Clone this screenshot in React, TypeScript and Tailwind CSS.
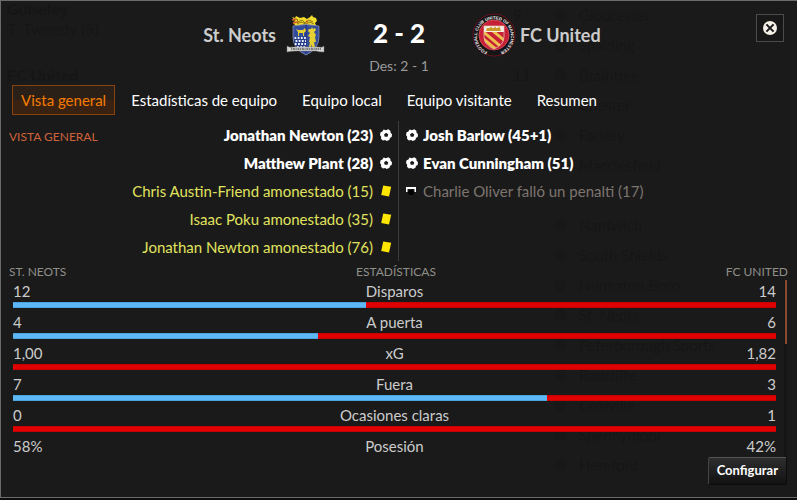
import type { ReactNode } from "react";

const tabs = [
  "Vista general",
  "Estadísticas de equipo",
  "Equipo local",
  "Equipo visitante",
  "Resumen",
];

type EventKind = "goal" | "card" | "miss";

const homeEvents: { kind: EventKind; text: string }[] = [
  { kind: "goal", text: "Jonathan Newton (23)" },
  { kind: "goal", text: "Matthew Plant (28)" },
  { kind: "card", text: "Chris Austin-Friend amonestado (15)" },
  { kind: "card", text: "Isaac Poku amonestado (35)" },
  { kind: "card", text: "Jonathan Newton amonestado (76)" },
];

const awayEvents: { kind: EventKind; text: string }[] = [
  { kind: "goal", text: "Josh Barlow (45+1)" },
  { kind: "goal", text: "Evan Cunningham (51)" },
  { kind: "miss", text: "Charlie Oliver falló un penalti (17)" },
];

const stats = [
  { label: "Disparos", home: "12", away: "14", share: 46.2 },
  { label: "A puerta", home: "4", away: "6", share: 40 },
  { label: "xG", home: "1,00", away: "1,82", share: 0 },
  { label: "Fuera", home: "7", away: "3", share: 70 },
  { label: "Ocasiones claras", home: "0", away: "1", share: 0 },
];

const leagueTeams = [
  "Gloucester",
  "Spalding",
  "Braintree",
  "Chester",
  "Farsley",
  "Macclesfield",
  "",
  "Nantwich",
  "South Shields",
  "Nuneaton Boro",
  "St. Neots",
  "Peterborough Sports",
  "Radcliffe",
  "Coalville",
  "Spennymoor",
  "Hereford",
];

const eventStyles: Record<EventKind, string> = {
  goal: "font-extrabold text-white",
  card: "text-[#e0e35e]",
  miss: "text-[#7d7570]",
};

function BallIcon() {
  return (
    <svg className="w-3 h-3 shrink-0" viewBox="0 0 12 12" aria-hidden="true">
      <path
        fill="#fff"
        d="M3.6.4l2.3.8L8.3.3l2 1.4.3 2 1.4 1.5-.3 2.8-1.6.8-.8 2.1-2.7 1-1.4-.8-2.3.3-1.9-1.7.2-2L0 6l.6-2.7 1.8-.8z"
      />
      <path fill="#1a1a1a" d="M6.1 3.8l2.2 1.6-.8 2.4H4.8L4 5.4z" />
    </svg>
  );
}

function CardIcon() {
  return (
    <svg className="w-3 h-3 shrink-0" viewBox="0 0 12 12" aria-hidden="true">
      <path fill="#ffe500" d="M3.2.4l8 1.4-2.2 9.8-7.8-1.6z" />
    </svg>
  );
}

function MissIcon() {
  return (
    <svg className="w-3 h-3 shrink-0" viewBox="0 0 12 12" aria-hidden="true">
      <path fill="#fff" d="M0 2h10v5H8.5V4h-7v3H0z" />
      <path fill="#000" d="M3 5h4l1 2-1 3H3L2 7z" />
    </svg>
  );
}

function EventIcon({ kind }: { kind: EventKind }) {
  if (kind === "goal") return <BallIcon />;
  if (kind === "card") return <CardIcon />;
  return <MissIcon />;
}

function NeotsCrest() {
  return (
    <svg className="w-10 h-[42px]" viewBox="0 0 40 42" role="img" aria-label="St. Neots">
      <path
        fill="#f1dc2d"
        d="M6 3l3 1 1-2 4 2 4-1 3 2 3-2 2-2 1 2 3 1 1 3-2 2 1 2-6 2H11L7 9l2-2z"
      />
      <path d="M7 7l4-2 1 3 4-2 3 3 4-3 4 2M11 10l4-2 5 2 4-2 4 2" fill="none" stroke="#7f6a10" strokeWidth=".9" />
      <path d="M6 6l4-1M7 9l5-1M20 7l2 1" stroke="#d0582b" strokeWidth="1.5" />
      <path d="M7 12q12-3 26 0v11q0 12-13 18Q7 35 7 23z" fill="#344c9c" stroke="#858eae" strokeWidth=".8" />
      <path d="M20 11v28" stroke="#202f70" />
      <path
        fill="#e6cf32"
        d="M10 15l2 1h5l2-2 1 3-2 2v3h-1v-3h-4v3h-1v-4zM25 15l1-2 1 2 2-1 1 2-2 2 2 3-1 2 1 5h-2l1 5h-3v-3l-1 3h-2l1-5h-1l1-5-2-1 2-3-2-2 1-2z"
      />
      <path fill="#263c87" d="M8 23h12v12l-5 1-7-7z" />
      <g stroke="#eef2ff" strokeWidth="1.8" strokeDasharray="1.8 1.4">
        <path d="M8.5 24H20M9.5 27H20M8.8 30H20M11 33H20" />
      </g>
      <path d="M1 32q3 2 6 1h26q3 1 5-1v6q-5 0-8-1H10q-5 0-9 1z" fill="#d8d8d5" stroke="#777" strokeWidth=".5" />
      <path d="M5 35h30" stroke="#5b5b5b" strokeWidth="1.6" strokeDasharray="1.2 .7 2 .6" />
    </svg>
  );
}

function UnitedCrest() {
  return (
    <svg className="w-[44px] h-[44px]" viewBox="0 0 44 44" role="img" aria-label="FC United">
      <defs>
        <path id="ring" d="M14.5 38.4A17 17 0 1 1 29.5 38.4" />
        <clipPath id="shield">
          <path d="M12 13h20v11q0 8-10 12-10-4-10-12z" />
        </clipPath>
      </defs>
      <circle cx="22" cy="22" r="21" fill="#171416" stroke="#65131e" />
      <circle cx="22" cy="22" r="15" fill="#c71f36" stroke="#e25c6b" strokeWidth=".7" />
      <text fill="#f0f0f0" fontSize="4.3" fontWeight="700" fontFamily="Liberation Sans, Arial, sans-serif">
        <textPath href="#ring" startOffset="50%" textAnchor="middle">
          FOOTBALL CLUB UNITED OF MANCHESTER
        </textPath>
      </text>
      <g clipPath="url(#shield)">
        <path fill="#c71f36" d="M10 10h24v28H10z" />
        <path stroke="#edc04c" strokeWidth="3" d="M8 16l26 22M8 23l24 20M15 13l24 20" />
        <path fill="#f3efe4" d="M11 12h22v7H11z" />
        <path fill="#c99a29" d="M14 18l1-3h3l1-2 1 2h2l1-2 1 2h2l1-2 1 2 1 3z" />
      </g>
      <path d="M12 13h20v11q0 8-10 12-10-4-10-12z" fill="none" stroke="#e6cdbb" strokeWidth=".7" />
    </svg>
  );
}

function Backdrop() {
  return (
    <div aria-hidden="true" className="absolute inset-0 text-[#161616]">
      <div className="absolute left-[6px] top-0 text-base leading-4 font-bold">Guiseley</div>
      <div className="absolute left-[6px] top-4 text-base">T. Tweedy (5)</div>
      <div className="absolute left-[6px] top-[62px] text-base font-bold">FC United</div>
      <ul className="absolute left-[512px] -top-px text-[15px]">
        {leagueTeams.map((team, i) => (
          <li key={i} className="flex h-[30px] items-center whitespace-nowrap">
            <span className="w-[42px]">{i === 0 || i === 2 ? i + 9 : ""}</span>
            {team && <span className="mr-3 h-3 w-3 rounded-full bg-[#181818]" />}
            {team}
          </li>
        ))}
      </ul>
    </div>
  );
}

function Caption({ children, className = "" }: { children: ReactNode; className?: string }) {
  return <h2 className={`text-xs leading-4 ${className}`}>{children}</h2>;
}

export default function App() {
  return (
    <div className="min-h-screen bg-[#0d0d0d] pb-[2px] font-[Lato,'Open_Sans',sans-serif] text-[15px]">
      <main className="relative flex min-h-[calc(100vh-2px)] flex-col border-l border-t border-b border-[#6b6b6b] bg-[#1a1a1a]">
        <Backdrop />

        <header className="relative grid grid-cols-[1fr_146px_1fr] pt-3">
          <div className="flex h-[44px] items-center justify-end gap-[10px] text-lg font-bold text-[#ccc]">
            St. Neots
            <NeotsCrest />
          </div>
          <div className="flex flex-col items-center">
            <div className="flex h-10 items-center text-[26px] font-black text-white">2 - 2</div>
            <div className="pt-[3px] text-sm leading-5 text-[#999]">Des: 2 - 1</div>
          </div>
          <div className="flex h-[44px] items-center gap-1 text-lg font-bold text-[#ccc]">
            <UnitedCrest />
            FC United
          </div>
        </header>

        <button
          type="button"
          aria-label="Cerrar"
          className="absolute right-[13px] top-[13px] flex h-7 w-7 items-center justify-center border border-[#4b4b4b] bg-[#181818]"
        >
          <svg className="h-[14px] w-[14px]" viewBox="0 0 14 14" aria-hidden="true">
            <circle cx="7" cy="7" r="7" fill="#f5f0e8" />
            <path d="M3.4 3.4l7.2 7.2M10.6 3.4l-7.2 7.2" stroke="#181818" strokeWidth="2" />
          </svg>
        </button>

        <nav className="relative mt-[9px] flex gap-[7px] pl-[11px]">
          {tabs.map((tab, i) => (
            <button
              key={tab}
              type="button"
              className={`h-[30px] whitespace-nowrap border px-2 ${
                i === 0
                  ? "border-[#8a420c] bg-linear-to-b from-[#2b2018] from-50% to-[#3a2212] to-50% text-[#f57c00]"
                  : "border-transparent text-white"
              }`}
            >
              {tab}
            </button>
          ))}
        </nav>

        <section className="relative mt-[6px] grid grid-cols-2">
          <Caption className="absolute left-2 top-2 text-[#d0623a]">VISTA GENERAL</Caption>
          <ul className="border-r border-[#3c3c3c] pr-[6px]">
            {homeEvents.map((e) => (
              <li key={e.text} className={`flex h-7 items-center justify-end gap-[7px] ${eventStyles[e.kind]}`}>
                {e.text}
                <EventIcon kind={e.kind} />
              </li>
            ))}
          </ul>
          <ul className="pl-[7px]">
            {awayEvents.map((e) => (
              <li key={e.text} className={`flex h-7 items-center gap-[5px] ${eventStyles[e.kind]}`}>
                <EventIcon kind={e.kind} />
                {e.text}
              </li>
            ))}
          </ul>
        </section>

        <section className="relative flex flex-1 flex-col">
          <div className="mt-[3px] flex justify-between pl-2 pr-[9px] text-[#8f8f8a]">
            <Caption>ST. NEOTS</Caption>
            <Caption>ESTADÍSTICAS</Caption>
            <Caption>FC UNITED</Caption>
          </div>
          <div className="flex pl-3 pr-[10px] text-[#ccc]">
            <div className="flex-1">
              {stats.map((s) => (
                <div key={s.label} className="mb-[3px]">
                  <div className="grid h-[22px] grid-cols-3 items-center">
                    <span>{s.home}</span>
                    <span className="text-center">{s.label}</span>
                    <span className="text-right">{s.away}</span>
                  </div>
                  <div className="h-[6px] border-y border-[#c80000] bg-[#e00000]">
                    <div
                      className="-my-px h-[6px] border-y border-[#4aa5df] bg-[#5eb8f7]"
                      style={{ width: `${s.share}%` }}
                      hidden={s.share === 0}
                    />
                  </div>
                </div>
              ))}
              <div className="grid h-[22px] grid-cols-3 items-center">
                <span>58%</span>
                <span className="text-center">Posesión</span>
                <span className="text-right">42%</span>
              </div>
            </div>
            <div className="ml-2 w-[3px] bg-[#151515]">
              <div className="ml-px h-16 w-[2px] bg-[#8a4a2e]" />
            </div>
          </div>
          <div className="flex justify-end pr-[10px]">
            <button
              type="button"
              className="h-7 rounded-xs border border-[#0c0c0c] border-t-[#555] border-l-[#444] bg-linear-to-b from-[#2e2e2e] to-[#121212] px-2 text-[13px] font-bold text-white"
            >
              Configurar
            </button>
          </div>
        </section>
      </main>
    </div>
  );
}
